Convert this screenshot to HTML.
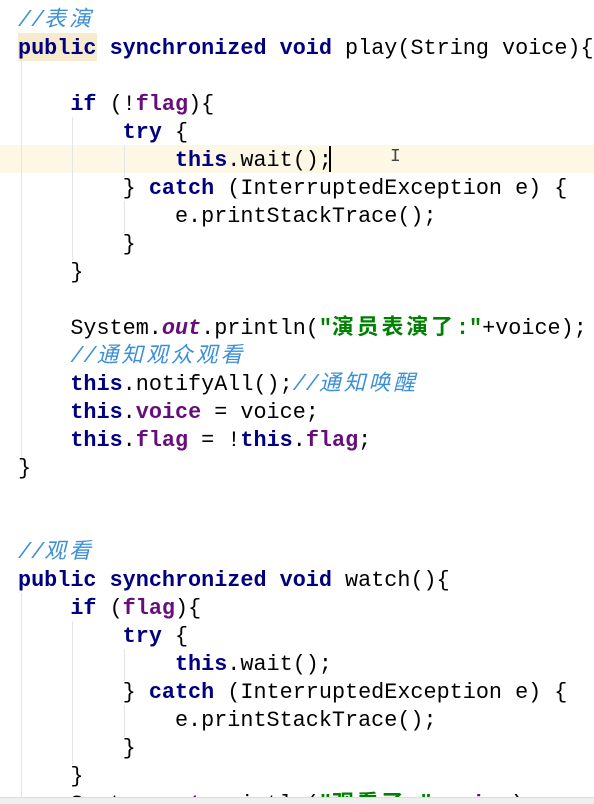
<!DOCTYPE html>
<html><head><meta charset="utf-8"><style>
html,body{margin:0;padding:0;background:#fff;width:594px;height:804px;overflow:hidden;position:relative}
pre{position:absolute;left:18px;top:7px;margin:0;font-family:"Liberation Mono","Noto Sans CJK SC",monospace;font-size:21.8px;line-height:28px;color:#000;z-index:2}
.k{color:#000080;font-weight:bold}
.f{color:#660e7a;font-weight:bold}
.fi{color:#660e7a;font-weight:bold;font-style:italic}
.s{color:#008000;font-weight:bold}
.c{color:#3d8fd8;font-style:italic}
.z{letter-spacing:3px}
.hl{position:absolute;left:0;top:145px;width:594px;height:28px;background:#fdf8e6;z-index:0}
.pub{position:absolute;left:18px;top:33px;width:79px;height:28px;background:#f7ebcd;z-index:1}
.g{position:absolute;width:1px;background:#e4e4e4;z-index:1}
.bar{position:absolute;left:0;top:797px;width:594px;height:7px;background:#efefef;z-index:3;border-top:1px solid #ddd}
.cur{position:absolute;left:329px;top:146px;width:2px;height:26px;background:#000;z-index:3}
.ib{position:absolute;left:390px;top:147px;font-family:"Liberation Mono",monospace;font-size:18px;color:#444;z-index:3}
</style></head><body>
<div class="hl"></div><div class="pub"></div>
<div class="g" style="left:21px;top:60px;height:402px"></div>
<div class="g" style="left:72px;top:117px;height:144px"></div>
<div class="g" style="left:124px;top:145px;height:32px"></div>
<div class="g" style="left:124px;top:201px;height:32px"></div>
<div class="g" style="left:21px;top:593px;height:204px"></div>
<div class="g" style="left:72px;top:621px;height:144px"></div>
<div class="g" style="left:124px;top:649px;height:32px"></div>
<div class="g" style="left:124px;top:705px;height:32px"></div>
<div class="cur"></div><div class="ib">I</div>
<pre><span class="c">//<span class="z">表演</span></span>
<span class="k">public</span> <span class="k">synchronized</span> <span class="k">void</span> play(String voice){

    <span class="k">if</span> (!<span class="f">flag</span>){
        <span class="k">try</span> {
            <span class="k">this</span>.wait();
        } <span class="k">catch</span> (InterruptedException e) {
            e.printStackTrace();
        }
    }

    System.<span class="fi">out</span>.println(<span class="s">"<span class="z">演员表演了</span>:"</span>+voice);
    <span class="c">//<span class="z">通知观众观看</span></span>
    <span class="k">this</span>.notifyAll();<span class="c">//<span class="z">通知唤醒</span></span>
    <span class="k">this</span>.<span class="f">voice</span> = voice;
    <span class="k">this</span>.<span class="f">flag</span> = !<span class="k">this</span>.<span class="f">flag</span>;
}


<span class="c">//<span class="z">观看</span></span>
<span class="k">public</span> <span class="k">synchronized</span> <span class="k">void</span> watch(){
    <span class="k">if</span> (<span class="f">flag</span>){
        <span class="k">try</span> {
            <span class="k">this</span>.wait();
        } <span class="k">catch</span> (InterruptedException e) {
            e.printStackTrace();
        }
    }
    System.<span class="fi">out</span>.println(<span class="s">"<span class="z">观看了</span>:"</span>+<span class="f">voice</span>);
</pre>
<div class="bar"></div>
</body></html>
